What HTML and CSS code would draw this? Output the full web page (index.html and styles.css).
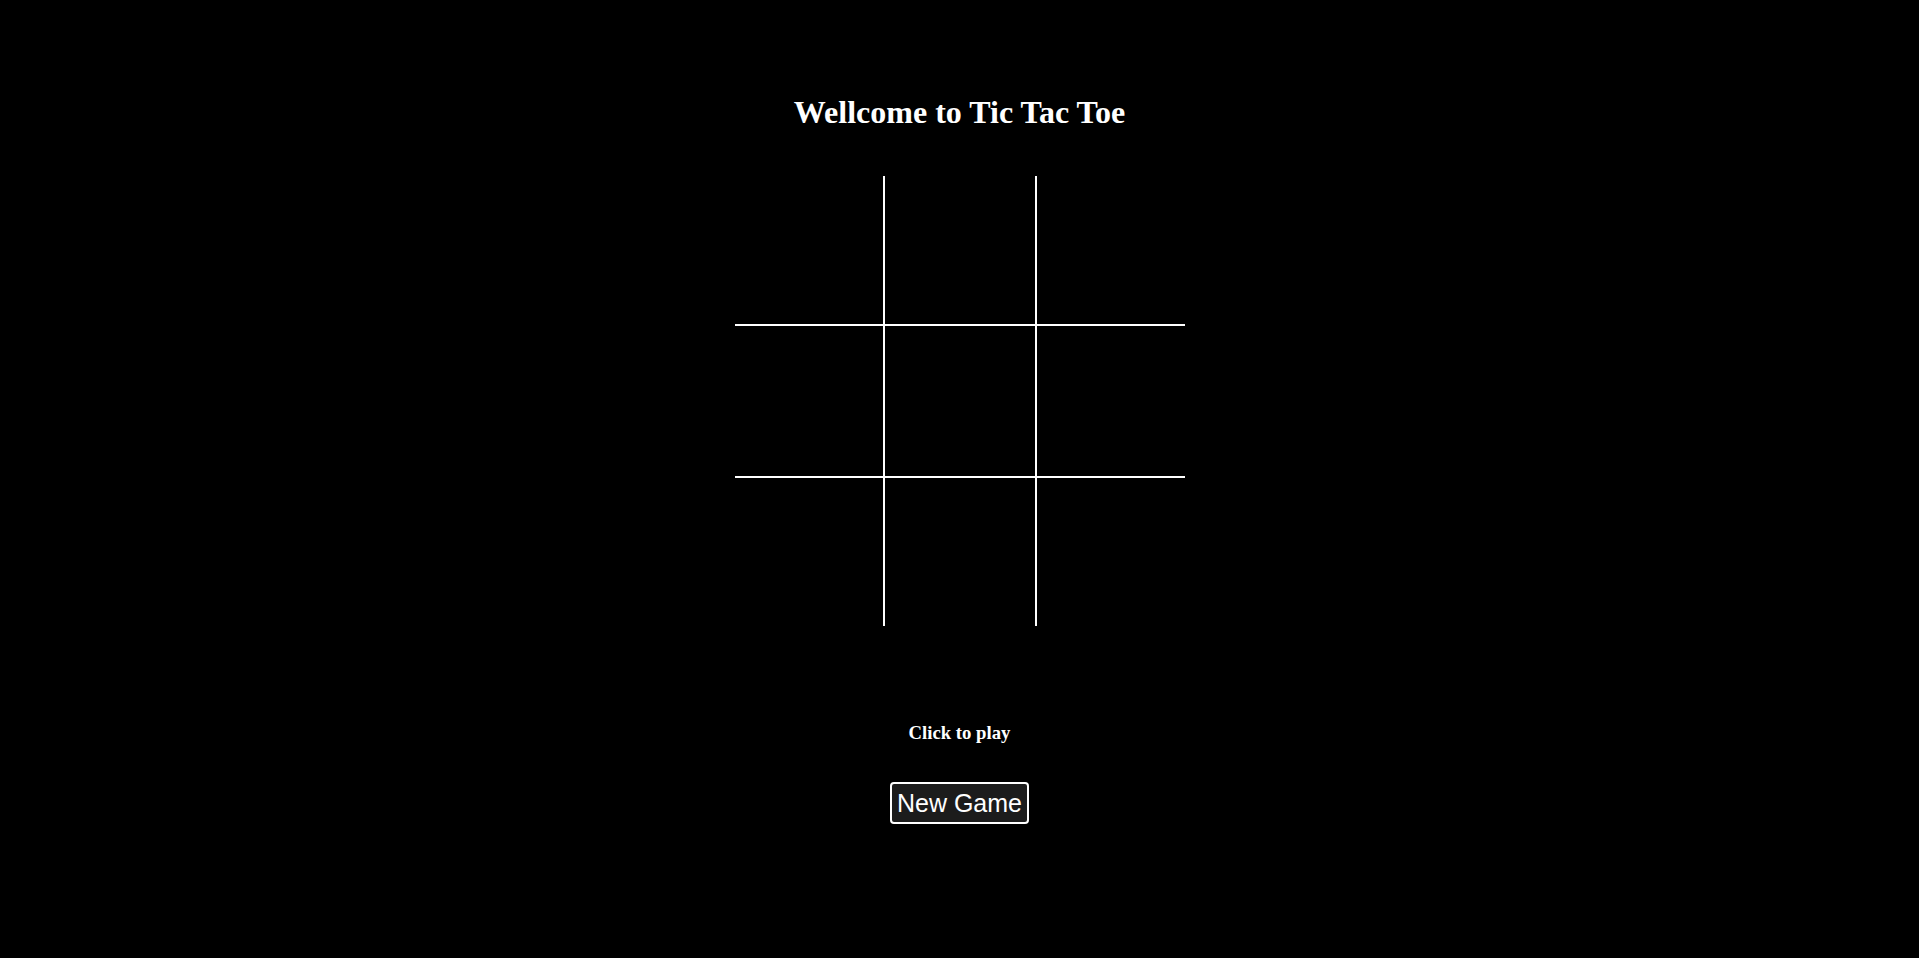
FILE: index.html
```html
<!DOCTYPE html>
<html lang="en">
<head>
<meta charset="utf-8">
<title>Tic Tac Toe</title>
<link rel="stylesheet" href="styles.css">
</head>
<body>
<main class="game">
  <h1 class="title">Wellcome to Tic Tac Toe</h1>
  <div class="board">
    <div class="cell"></div><div class="cell"></div><div class="cell"></div>
    <div class="cell"></div><div class="cell"></div><div class="cell"></div>
    <div class="cell"></div><div class="cell"></div><div class="cell"></div>
  </div>
  <h3 class="status">Click to play</h3>
  <button class="new-game" type="button">New Game</button>
</main>
</body>
</html>
```
FILE: styles.css
```css
html, body {
  margin: 0;
  padding: 0;
  background: #000;
  color: #fff;
  font-family: "Liberation Serif", "Times New Roman", serif;
}

.game {
  display: flex;
  flex-direction: column;
  align-items: center;
  padding-top: 94px;
}

.title {
  margin: 0;
  font-size: 32px;
  line-height: 37px;
  font-weight: bold;
}

.board {
  margin-top: 45px;
  display: grid;
  grid-template-columns: 148px 150px 148px;
  grid-template-rows: 148px 150px 148px;
  gap: 2px;
  background: #fff;
}

.cell {
  background: #000;
}

.status {
  margin: 96px 0 0;
  font-size: 18.72px;
  line-height: 22px;
  font-weight: bold;
}

.new-game {
  margin-top: 38px;
  font-family: "Liberation Sans", Arial, sans-serif;
  font-size: 25px;
  line-height: 28px;
  color: #fff;
  background: #1c1c1c;
  border: 2px solid #fff;
  border-radius: 4px;
  padding: 5px 5px;
  cursor: pointer;
}
```
